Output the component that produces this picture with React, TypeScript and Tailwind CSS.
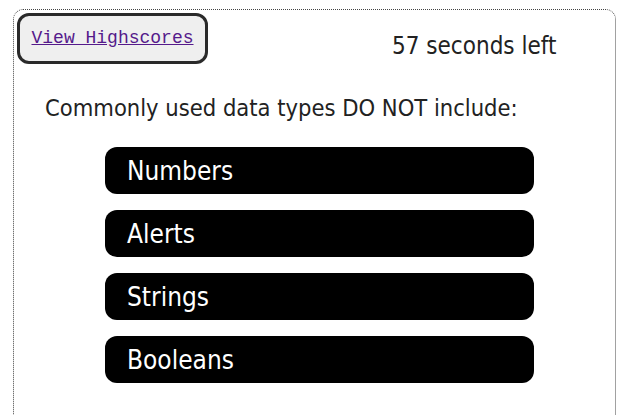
const choices = ["Numbers", "Alerts", "Strings", "Booleans"];

export default function App() {
  return (
    <div className="h-[415px] overflow-hidden bg-white pl-[13px] pt-[9px] font-['DejaVu_Sans_Condensed','DejaVu_Sans',sans-serif] text-[#222]">
      <div className="h-[460px] w-[603px] rounded-[10px] border border-dotted border-[#444] pl-[3px] pt-[3px]">
        <div className="flex items-start">
          <button className="h-[51px] w-[191px] rounded-[12px] border-[3px] border-[#2a2a2a] bg-[#efefef] font-['Liberation_Mono',monospace] text-[18px] text-[#551a8b] underline">
            View Highscores
          </button>
          <div className="ml-[184px] mt-[21px] text-[24px] leading-none">57 seconds left</div>
        </div>
        <p className="ml-[28px] mt-[33px] text-[23.5px] leading-none">
          Commonly used data types DO NOT include:
        </p>
        <div className="ml-[88px] mt-[26px] flex w-[429px] flex-col gap-[16px]">
          {choices.map((c) => (
            <button
              key={c}
              className="h-[47px] rounded-[12px] bg-black pl-[22px] pt-[3px] text-left text-[26px] text-white"
            >
              {c}
            </button>
          ))}
        </div>
      </div>
    </div>
  );
}
